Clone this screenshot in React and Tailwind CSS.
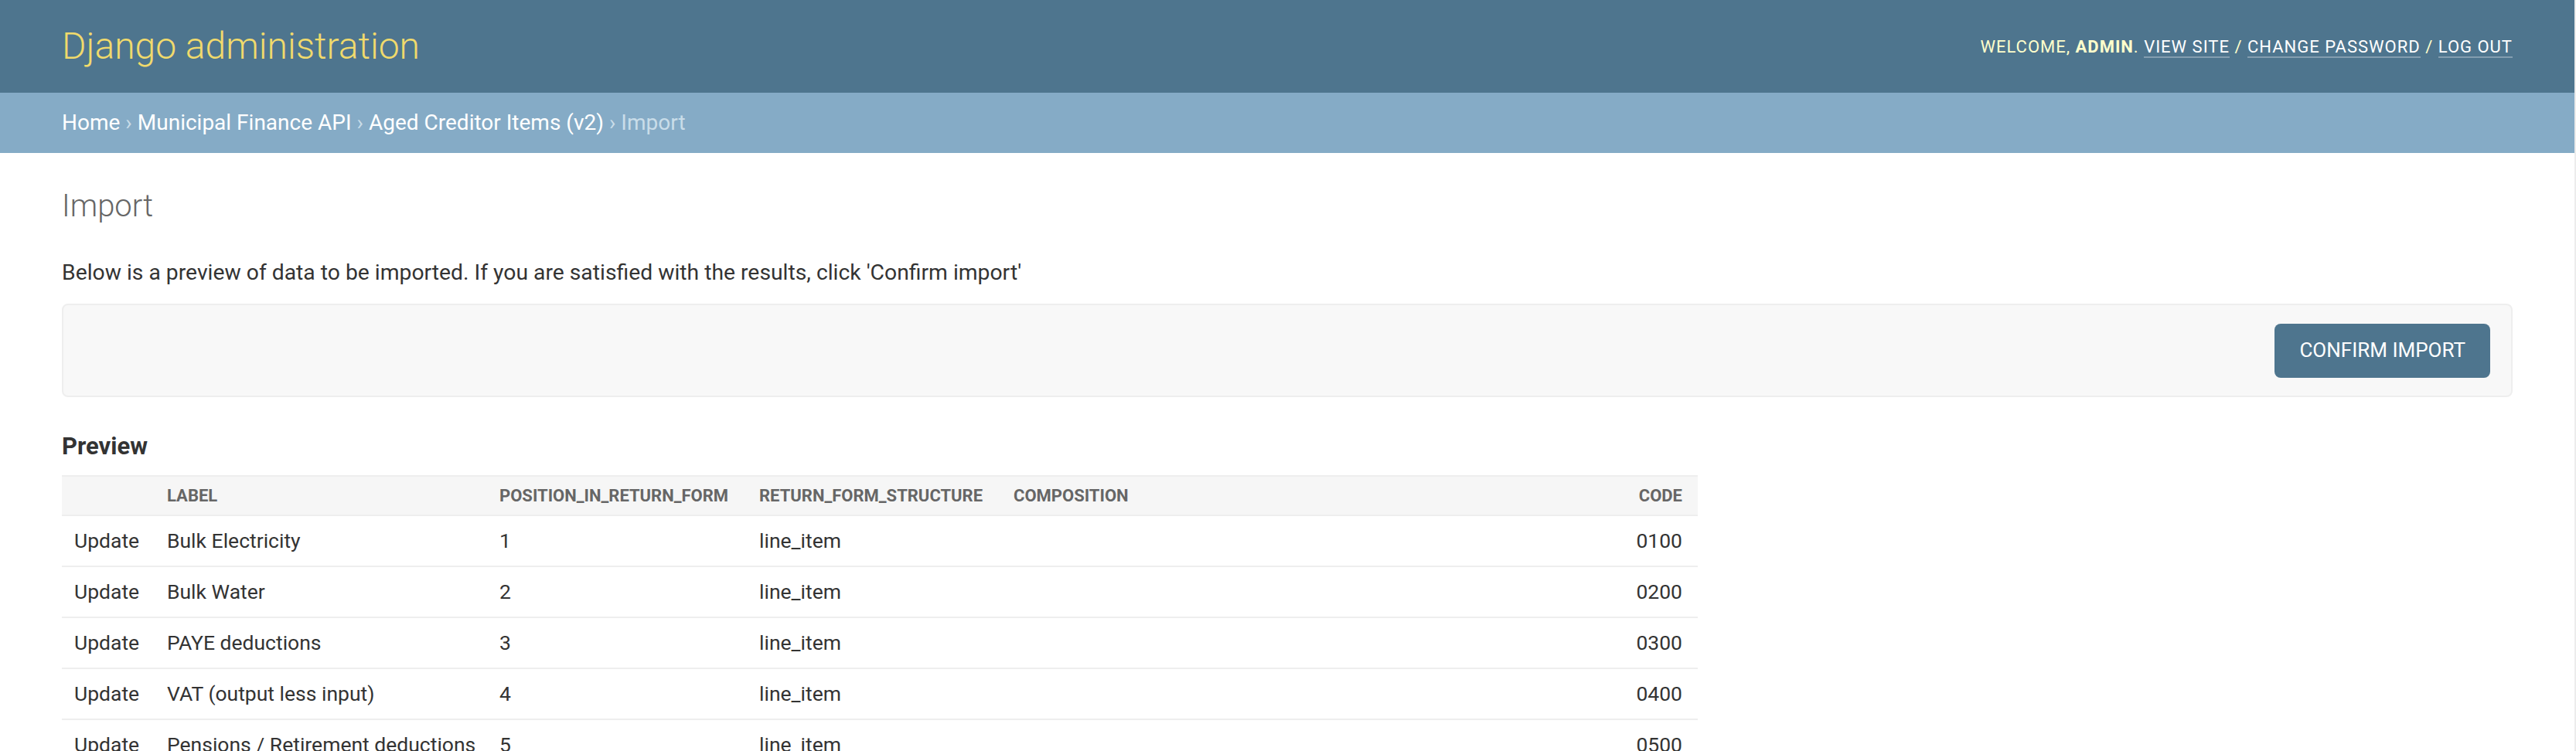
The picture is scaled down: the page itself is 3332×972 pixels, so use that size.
const ROWS = [
  { action: 'Update', label: 'Bulk Electricity', position: '1', structure: 'line_item', composition: '', code: '0100' },
  { action: 'Update', label: 'Bulk Water', position: '2', structure: 'line_item', composition: '', code: '0200' },
  { action: 'Update', label: 'PAYE deductions', position: '3', structure: 'line_item', composition: '', code: '0300' },
  { action: 'Update', label: 'VAT (output less input)', position: '4', structure: 'line_item', composition: '', code: '0400' },
  { action: 'Update', label: 'Pensions / Retirement deductions', position: '5', structure: 'line_item', composition: '', code: '0500' },
];

const COLS = 'grid grid-cols-[120px_430px_336px_329px_1fr_200px] w-[2116px] items-center';

function UserTools() {
  const link = 'text-white border-b-2 border-white/30';
  return (
    <div className="text-[22px] uppercase tracking-[1px] text-[#ffffcc] whitespace-nowrap">
      Welcome, <strong className="font-bold">admin</strong>.{' '}
      <a href="#" className={link}>View site</a> /{' '}
      <a href="#" className={link}>Change password</a> /{' '}
      <a href="#" className={link}>Log out</a>
    </div>
  );
}

function Breadcrumbs() {
  return (
    <nav className="h-[78px] bg-[#85abc6] flex items-center px-[80px] text-[28px] text-[#c9dde9]">
      <a href="#" className="text-white">Home</a>
      <span className="mx-[7px]">›</span>
      <a href="#" className="text-white">Municipal Finance API</a>
      <span className="mx-[7px]">›</span>
      <a href="#" className="text-white">Aged Creditor Items (v2)</a>
      <span className="mx-[7px]">›</span>
      <span>Import</span>
    </nav>
  );
}

export default function App() {
  return (
    <div className="flex h-[972px] overflow-hidden bg-white font-['Roboto',sans-serif]">
      <div className="flex-1 min-w-0">
        <header className="h-[120px] bg-[#4e758e] flex items-center justify-between px-[80px]">
          <h1 className="text-[48px] font-light text-[#f0da6c] leading-none">Django administration</h1>
          <UserTools />
        </header>
        <Breadcrumbs />

        <main className="px-[80px] pt-[45px]">
          <h1 className="text-[40px] leading-[48px] font-light text-[#666666]">Import</h1>
          <p className="mt-[44px] text-[28.3px] leading-[36px] text-[#333333]">
            Below is a preview of data to be imported. If you are satisfied with the results, click 'Confirm import'
          </p>

          <div className="mt-[22px] h-[121px] flex items-center justify-end pr-[27px] bg-[#f8f8f8] border-2 border-[#eeeeee] rounded-[8px]">
            <button className="h-[70px] px-[32px] rounded-[8px] bg-[#4e758e] text-white text-[26px] uppercase">
              Confirm import
            </button>
          </div>

          <h2 className="mt-[44px] text-[31px] leading-[40px] font-bold text-[#333333]">Preview</h2>

          <div className="mt-[17px]">
            <div className={`${COLS} h-[53px] bg-[#f6f6f6] border-y-2 border-[#eeeeee] text-[22px] font-bold uppercase text-[#666666]`}>
              <div className="px-[16px]"></div>
              <div className="px-[16px]">label</div>
              <div className="px-[16px]">position_in_return_form</div>
              <div className="px-[16px]">return_form_structure</div>
              <div className="px-[16px]">composition</div>
              <div className="px-[20px] text-right">code</div>
            </div>
            {ROWS.map(row => (
              <div key={row.code} className={`${COLS} h-[66px] border-b-2 border-[#eeeeee] text-[26.5px] text-[#333333]`}>
                <div className="px-[16px]">{row.action}</div>
                <div className="px-[16px] whitespace-nowrap">{row.label}</div>
                <div className="px-[16px]">{row.position}</div>
                <div className="px-[16px]">{row.structure}</div>
                <div className="px-[16px]">{row.composition}</div>
                <div className="px-[20px] text-right">{row.code}</div>
              </div>
            ))}
          </div>
        </main>
      </div>
      <div className="w-[2px] bg-[#ececec]" />
    </div>
  );
}
